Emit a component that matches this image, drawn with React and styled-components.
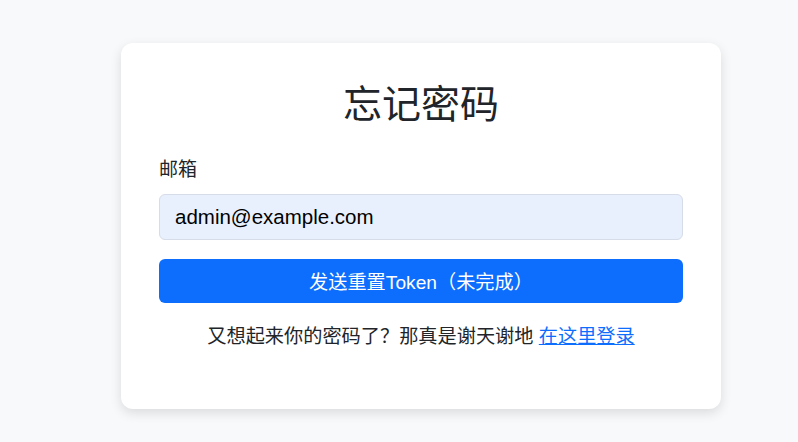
import React from "react";
import styled, { createGlobalStyle } from "styled-components";

const GlobalStyle = createGlobalStyle`
  body {
    margin: 0;
    background: #f8f9fa;
    font-family: "Liberation Sans", "Noto Sans CJK SC", sans-serif;
    color: #212529;
  }
`;

const Page = styled.div`
  min-height: 442px;
  padding-top: 43px;
  padding-left: 121px;
  box-sizing: border-box;
`;

const Card = styled.div`
  width: 600px;
  box-sizing: border-box;
  background: #fff;
  border-radius: 12px;
  box-shadow: 0 4px 12px rgba(0, 0, 0, 0.12);
  padding: 38px 38px 58px;
  display: flex;
  flex-direction: column;
`;

const Title = styled.h1`
  margin: 0 0 27px;
  font-size: 39px;
  font-weight: 400;
  line-height: 48px;
  text-align: center;
  color: #212529;
`;

const Label = styled.label`
  font-size: 19px;
  line-height: 28px;
  margin-bottom: 10px;
`;

const Input = styled.input`
  height: 46px;
  box-sizing: border-box;
  padding: 0 15px;
  font-family: inherit;
  font-size: 20.5px;
  color: #000;
  background: #e8f0fe;
  border: 1px solid #d6dde8;
  border-radius: 6px;
  outline: none;
`;

const Button = styled.button`
  margin-top: 19px;
  height: 44px;
  border: none;
  border-radius: 6px;
  background: #0d6efd;
  color: #fff;
  font-family: inherit;
  font-size: 19.2px;
  cursor: pointer;
`;

const Footnote = styled.p`
  margin: 20px 0 0;
  font-size: 19.2px;
  line-height: 28px;
  text-align: center;
`;

const Link = styled.a`
  color: #0d6efd;
  text-decoration: underline;
`;

export default function App() {
  return (
    <>
      <GlobalStyle />
      <Page>
        <Card>
          <Title>忘记密码</Title>
          <Label htmlFor="email">邮箱</Label>
          <Input id="email" type="email" defaultValue="admin@example.com" />
          <Button>发送重置Token（未完成）</Button>
          <Footnote>
            又想起来你的密码了？那真是谢天谢地 <Link href="#">在这里登录</Link>
          </Footnote>
        </Card>
      </Page>
    </>
  );
}
